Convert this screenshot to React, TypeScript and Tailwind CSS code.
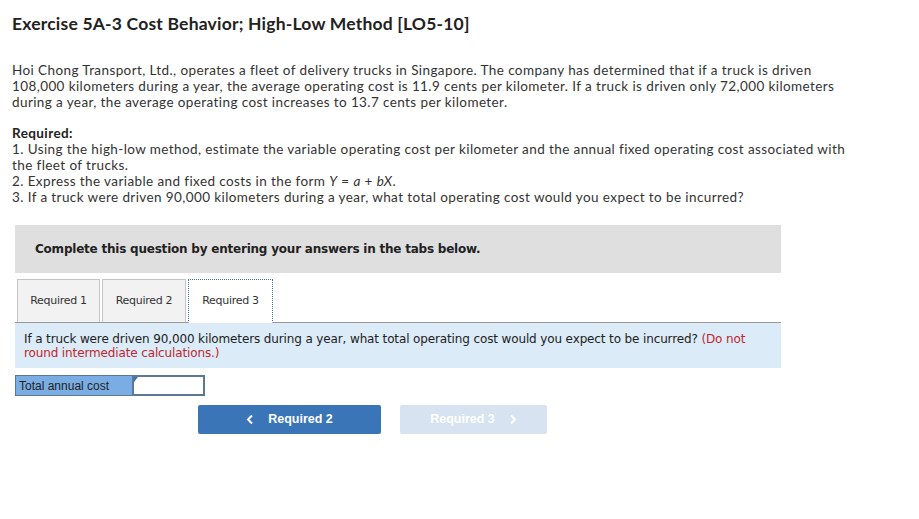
export default function App() {
  return (
    <div className="min-h-screen w-[919px] bg-white text-[#333] font-['Lato','Open_Sans',sans-serif]">
      <div className="pl-3 pt-3">
        <h1 className="text-[17.5px] font-bold leading-[24px] text-[#222] tracking-[0.2px]">
          Exercise 5A-3 Cost Behavior; High-Low Method [LO5-10]
        </h1>

        <p className="mt-[26px] w-[830px] text-[13.5px] leading-[16px] tracking-[0.4px]">
          Hoi Chong Transport, Ltd., operates a fleet of delivery trucks in Singapore. The company has determined that if a truck is driven 108,000 kilometers during a year, the average operating cost is 11.9 cents per kilometer. If a truck is driven only 72,000 kilometers during a year, the average operating cost increases to 13.7 cents per kilometer.
        </p>

        <div className="mt-[15px] w-[840px] text-[13.5px] leading-[16px] tracking-[0.4px]">
          <div className="font-bold text-[#222]">Required:</div>
          <div>
            1. Using the high-low method, estimate the variable operating cost per kilometer and the annual fixed operating cost associated with the fleet of trucks.
          </div>
          <div>
            2. Express the variable and fixed costs in the form <i>Y</i> = <i>a</i> + <i>bX</i>.
          </div>
          <div>3. If a truck were driven 90,000 kilometers during a year, what total operating cost would you expect to be incurred?</div>
        </div>
      </div>

      <div className="ml-[15px] w-[766px] font-['DejaVu_Sans',sans-serif]">
        <div className="mt-[20px] h-[48px] bg-[#dfdfdf] pl-5 flex items-center text-[12px] font-bold text-[#222] tracking-[-0.22px]">
          Complete this question by entering your answers in the tabs below.
        </div>

        <div className="mt-[6px] flex items-end border-b border-[#999] h-[44px]">
          <div className="ml-[2px] w-[83px] h-[43px] bg-[#f2f2f2] border border-[#c4c4c4] border-b-0 flex items-center justify-center text-[11px] tracking-[-0.3px] text-[#333]">
            Required 1
          </div>
          <div className="ml-[2px] w-[84px] h-[43px] bg-[#f2f2f2] border border-[#c4c4c4] border-b-0 flex items-center justify-center text-[11px] tracking-[-0.3px] text-[#333]">
            Required 2
          </div>
          <div className="ml-[2px] w-[85px] h-[44px] -mb-px bg-white border border-dotted border-[#3a6fb0] border-b-white flex items-center justify-center text-[11px] tracking-[-0.3px] text-[#333]">
            Required 3
          </div>
        </div>

        <div className="h-[45px] bg-[#dcebf8] pl-[9px] pt-[9px] pr-[20px] text-[12px] leading-[14px] tracking-[-0.13px] text-[#222]">
          If a truck were driven 90,000 kilometers during a year, what total operating cost would you expect to be incurred?{" "}
          <span className="text-[#c0272d]">(Do not round intermediate calculations.)</span>
        </div>

        <div className="mt-[7px] flex h-[21px] font-['Liberation_Sans',sans-serif] text-[12px]">
          <div className="w-[118px] bg-[#7aade4] border border-[#5b7896] pl-[3px] flex items-center text-[#222]">
            Total annual cost
          </div>
          <div className="relative w-[72px] bg-white border-2 border-l border-[#5b7896]">
            <span className="absolute left-0 top-0 w-0 h-0 border-t-[5px] border-r-[4px] border-t-[#3a75b8] border-r-transparent"></span>
          </div>
        </div>

        <div className="mt-[9px] flex font-['Liberation_Sans',sans-serif] text-[12.5px] font-bold text-white">
          <div className="ml-[183px] w-[183px] h-[29px] rounded-[2px] bg-[#3a75b8] flex items-center justify-center gap-[14px]">
            <svg width="8" height="11" viewBox="0 0 8 11" fill="none" stroke="white" strokeWidth="2">
              <path d="M6 1.5 L2 5.5 L6 9.5" />
            </svg>
            <span>Required 2</span>
          </div>
          <div className="ml-[19px] w-[147px] h-[29px] rounded-[2px] bg-[#d7e3f0] flex items-center justify-center gap-[14px]">
            <span>Required 3</span>
            <svg width="8" height="11" viewBox="0 0 8 11" fill="none" stroke="white" strokeWidth="2">
              <path d="M2 1.5 L6 5.5 L2 9.5" />
            </svg>
          </div>
        </div>
      </div>
    </div>
  );
}
